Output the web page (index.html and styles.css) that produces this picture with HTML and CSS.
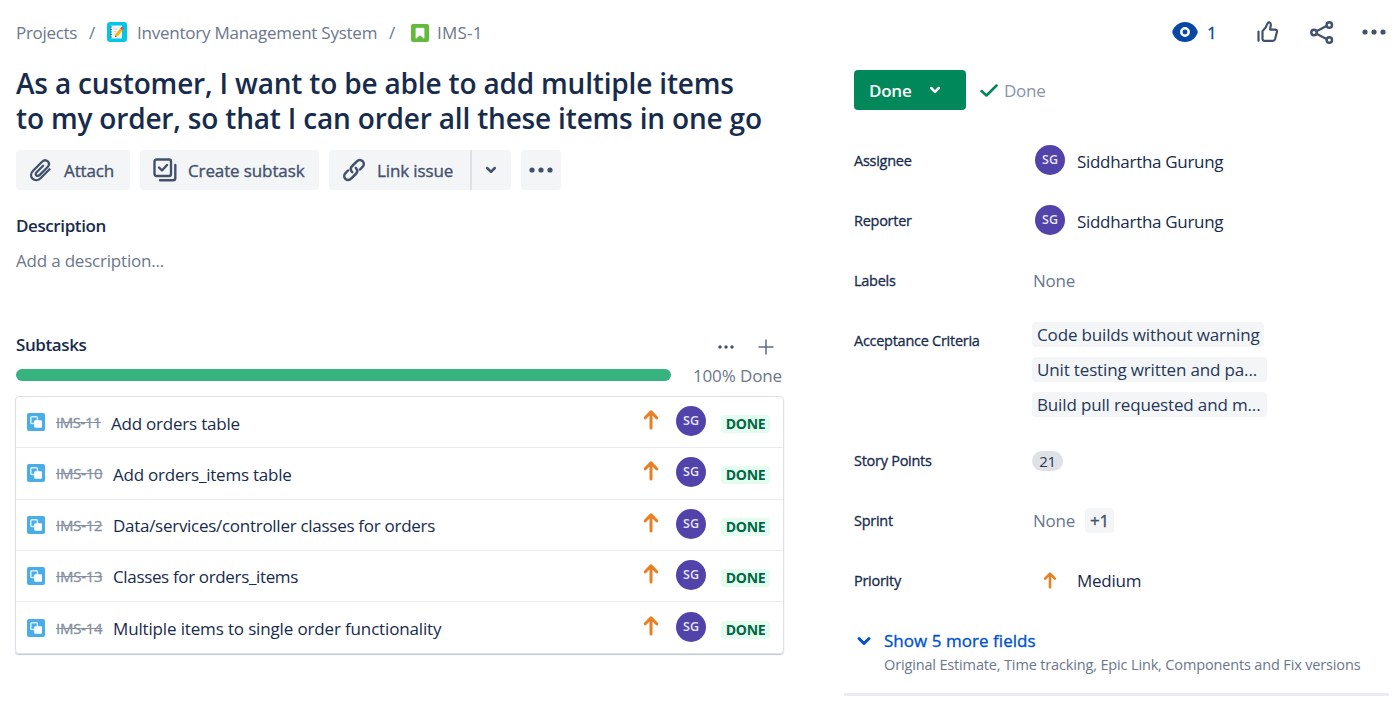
FILE: index.html
```
<!DOCTYPE html>
<html lang="en">
<head>
<meta charset="utf-8">
<title>IMS-1</title>
<link rel="stylesheet" href="styles.css">
</head>
<body>
<svg class="defs" width="0" height="0" aria-hidden="true">
  <symbol id="subtask" viewBox="0 0 18 18"><rect width="18" height="18" rx="2" fill="#4BADE8"/><rect x="3.8" y="3.8" width="6.6" height="6.6" rx="1" fill="none" stroke="#d5ecfa" stroke-width="1.5"/><rect x="7.2" y="7.2" width="7.8" height="7.6" rx="1.2" fill="#fff"/></symbol>
  <symbol id="arrow" viewBox="0 0 16 20"><path d="M8 18V2M2.300 7.800L8 1.900l5.700 5.900" fill="none" stroke="#E97F23" stroke-width="3" stroke-linecap="round" stroke-linejoin="round"/></symbol>
  <symbol id="chevron" viewBox="0 0 12 8"><path d="M2.200 2l3.800 3.800L9.800 2" fill="none" stroke="currentColor" stroke-width="2.500" stroke-linecap="round" stroke-linejoin="round"/></symbol>
  <symbol id="dots" viewBox="0 0 24 6"><circle cx="3" cy="3" r="2.6"/><circle cx="12" cy="3" r="2.6"/><circle cx="21" cy="3" r="2.6"/></symbol>
</svg>
<div class="page">
  <main class="main">
    <nav class="crumbs">
      <span class="c-projects">Projects</span><span class="slash">/</span>
      <svg class="project-icon" viewBox="0 0 20 20"><rect width="20" height="20" rx="3" fill="#00C7E5"/><rect x="4" y="3.500" width="11" height="13" fill="#f3f3f5"/><path d="M3 5h2M3 7.500h2M3 10h2M3 12.500h2M3 15h2" stroke="#596273" stroke-width="1"/><path d="M6.500 7h4M6.500 9.500h3M6.500 12h2" stroke="#c9ccd2" stroke-width=".8"/><path d="M8 15l1-3.500 4.500-5.300 2.300 1.800-4.500 5.500z" fill="#FFB300"/><path d="M13.200 6.500l1.500-1.800 2 1.600-1.400 1.900z" fill="#EC4055"/><path d="M8 15l.5-1.800 1.300 1z" fill="#424242"/></svg>
      <span class="c-name">Inventory Management System</span><span class="slash slash2">/</span>
      <svg class="story-icon" viewBox="0 0 18 18"><rect width="18" height="18" rx="2" fill="#63BA3C"/><path d="M5 4.300h8v10L9 10.800 5 14.300z" fill="#fff" stroke="#fff" stroke-width=".8" stroke-linejoin="round"/></svg>
      <span class="c-key">IMS-1</span>
    </nav>
    <h1 class="title">As a customer, I want to be able to add multiple items<br>to my order, so that I can order all these items in one go</h1>
    <div class="actions">
      <button class="btn attach"><svg width="24" height="26" viewBox="0 0 24 26"><path d="M21.500 12.300l-8.700 8.700c-2.500 2.500-6 2.800-8.200.7-2.200-2.200-1.900-5.600.5-8l8.700-8.700c1.900-1.900 4.400-2.100 6-.6 1.600 1.600 1.400 4-.4 5.800l-7.900 7.900c-1 1-2.400 1.100-3.200.3-.9-.9-.7-2.200.3-3.200l6.500-6.500" fill="none" stroke="#42526E" stroke-width="2.300" stroke-linecap="round"/></svg><span>Attach</span></button>
      <button class="btn create"><svg width="24" height="24" viewBox="0 0 24 24"><rect x="1.500" y="1.500" width="16.500" height="16.500" rx="2" fill="none" stroke="#42526E" stroke-width="2.400"/><path d="M6 9.500l3 3 5-5.500M7 22.300h13q2.300 0 2.300-2.300V7" fill="none" stroke="#42526E" stroke-width="2.400" stroke-linecap="round" stroke-linejoin="round"/></svg><span>Create subtask</span></button>
      <div class="split"><button class="btn link"><svg width="24" height="24" viewBox="0 0 24 24"><path d="M10.200 14.200c-1.900-2-1.700-4.500 0-6.200l4.700-4.700c1.700-1.700 4.100-1.700 5.700-.1s1.600 4-.1 5.700L18 11.500M13.800 9.800c1.900 2 1.700 4.500 0 6.200l-4.700 4.700c-1.700 1.700-4.100 1.700-5.700.1s-1.600-4 .1-5.700L6 12.500" fill="none" stroke="#42526E" stroke-width="2.500" stroke-linecap="round"/></svg><span>Link issue</span></button><button class="btn caret"><svg width="12" height="8"><use href="#chevron"/></svg></button></div>
      <button class="btn more"><svg width="24" height="6" fill="#42526E"><use href="#dots"/></svg></button>
    </div>
    <h2 class="label description">Description</h2>
    <p class="placeholder">Add a description...</p>
    <div class="subhead"><h2 class="label">Subtasks</h2>
      <svg class="dots-small" width="16" height="4" viewBox="0 0 24 6" fill="#42526E"><use href="#dots"/></svg>
      <svg class="plus" width="16" height="16" viewBox="0 0 16 16"><path d="M8 .5v15M.5 8h15" stroke="#5d6b84" stroke-width="1.500"/></svg>
    </div>
    <div class="progress"><div class="bar"></div><span>100% Done</span></div>
    <ul class="list">
      <li><svg class="type"><use href="#subtask"/></svg><span class="key k11">IMS-11</span><span class="name">Add orders table</span><svg class="prio"><use href="#arrow"/></svg><span class="avatar">SG</span><span class="badge">DONE</span></li>
      <li><svg class="type"><use href="#subtask"/></svg><span class="key">IMS-10</span><span class="name">Add orders_items table</span><svg class="prio"><use href="#arrow"/></svg><span class="avatar">SG</span><span class="badge">DONE</span></li>
      <li><svg class="type"><use href="#subtask"/></svg><span class="key">IMS-12</span><span class="name mid">Data/services/controller classes for orders</span><svg class="prio"><use href="#arrow"/></svg><span class="avatar">SG</span><span class="badge">DONE</span></li>
      <li><svg class="type"><use href="#subtask"/></svg><span class="key">IMS-13</span><span class="name tight">Classes for orders_items</span><svg class="prio"><use href="#arrow"/></svg><span class="avatar">SG</span><span class="badge">DONE</span></li>
      <li><svg class="type"><use href="#subtask"/></svg><span class="key">IMS-14</span><span class="name loose">Multiple items to single order functionality</span><svg class="prio"><use href="#arrow"/></svg><span class="avatar">SG</span><span class="badge">DONE</span></li>
    </ul>
  </main>
  <aside class="side">
    <div class="tools">
      <svg width="26" height="20" viewBox="0 0 26 20"><path d="M13 0C6.500 0 2.200 4.500.5 8.800q-.5 1.200 0 2.400C2.200 15.500 6.500 20 13 20s10.800-4.500 12.500-8.800q.5-1.200 0-2.400C23.800 4.500 19.500 0 13 0z" fill="#0747A6"/><circle cx="13" cy="10" r="3.700" fill="#0747A6" stroke="#fff" stroke-width="2.500"/></svg>
      <span class="watch">1</span>
      <svg class="thumb" width="22" height="22" viewBox="0 0 22 22" fill="none" stroke="#42526E" stroke-width="2.200" stroke-linecap="round" stroke-linejoin="round"><path d="M1.500 10.500v9.200M5.500 10.200v7.600q0 2 2 2h8.300q1.800 0 2.300-1.700l1.800-7q.6-2.500-1.900-2.500h-4.900l.7-4.600q.2-2.200-1.500-2.700-1.400-.2-2 1.500C9.300 6.500 8.300 8 5.500 10.200z"/></svg>
      <svg class="share" width="24" height="23" viewBox="0 0 24 23" fill="none" stroke="#42526E" stroke-width="2.400"><path d="M6.500 10.200L16.500 5M6.500 12.800l10 5.200"/><circle cx="4" cy="11.500" r="2.700"/><circle cx="19.300" cy="4" r="2.700"/><circle cx="19.300" cy="19" r="2.700"/></svg>
      <svg class="tdots" width="24" height="6" fill="#42526E"><use href="#dots"/></svg>
    </div>
    <div class="status"><button class="done"><span>Done</span><svg width="12" height="8"><use href="#chevron"/></svg></button><svg class="check" width="18" height="13" viewBox="0 0 18 13"><path d="M1.500 7l5 4.500L16.500 1.500" fill="none" stroke="#00875A" stroke-width="2.500" stroke-linecap="round" stroke-linejoin="round"/></svg><span class="resolution">Done</span></div>
    <dl class="fields">
      <dt>Assignee</dt><dd class="person"><span class="avatar">SG</span><span class="pname">Siddhartha Gurung</span></dd>
      <dt>Reporter</dt><dd class="person"><span class="avatar">SG</span><span class="pname">Siddhartha Gurung</span></dd>
      <dt>Labels</dt><dd class="none"><span>None</span></dd>
      <dt class="ac">Acceptance Criteria</dt><dd class="criteria"><span class="tag g1">Code builds without warning</span><span class="tag g2">Unit testing written and pa...</span><span class="tag g3">Build pull requested and m...</span></dd>
      <dt>Story Points</dt><dd><span class="points">21</span></dd>
      <dt>Sprint</dt><dd class="none"><span>None</span><span class="plus-one">+1</span></dd>
      <dt>Priority</dt><dd class="medium"><svg class="prio"><use href="#arrow"/></svg><span>Medium</span></dd>
    </dl>
    <div class="morefields"><svg width="16" height="10" viewBox="0 0 16 10"><path d="M3 2.500l5 5 5-5" fill="none" stroke="#0052CC" stroke-width="3" stroke-linecap="round" stroke-linejoin="round"/></svg><div><div class="show">Show 5 more fields</div><div class="hint">Original Estimate, Time tracking, Epic Link, Components and Fix versions</div></div></div>
  </aside>
</div>
</body>
</html>
```
FILE: styles.css
```
* { box-sizing: border-box; margin: 0; padding: 0; }
body { width: 1395px; height: 702px; overflow: hidden; background: #fff; color: #172B4D; font: 400 17px/24px "Open Sans", "Noto Sans", sans-serif; letter-spacing: -.24px; }
.defs { display: block; }
svg { flex: none; }
span, h1, dt, p { white-space: nowrap; }
.page { display: grid; grid-template-columns: 768px 551px; column-gap: 60px; padding-left: 16px; }
.crumbs { display: flex; align-items: center; height: 64px; color: #6B778C; }
.crumbs span, .btn span, .done span, .resolution, .tools span, .fields .none > span:first-child, .medium span { padding-top: 2px; }
.c-projects { width: 61px; letter-spacing: -.3px; }
.slash { width: 30px; text-align: center; }
.project-icon { width: 20px; height: 20px; }
.c-name { width: 240px; margin-left: 10px; }
.story-icon { width: 18px; height: 18px; margin-left: 4px; margin-top: 2px; }
.c-key { margin-left: 8px; letter-spacing: .2px; }
.title { height: 86px; padding-top: 2px; font-size: 28px; font-weight: 600; line-height: 35px; letter-spacing: -.18px; }
.actions { display: flex; gap: 10px; }
button { border: 0; font: inherit; letter-spacing: inherit; color: inherit; }
.btn { display: flex; align-items: center; height: 40px; border-radius: 4px; background: #F4F5F7; color: #42526E; letter-spacing: -.12px; -webkit-text-stroke: .35px currentColor; }
.attach { width: 114px; padding-left: 12px; gap: 12px; }
.create { width: 179px; padding-left: 13px; gap: 11px; }
.split { display: flex; }
.link { width: 141px; padding-left: 13px; gap: 11px; border-radius: 4px 0 0 4px; }
.caret { width: 41px; padding-left: 13px; border-left: 2px solid #DFE1E6; border-radius: 0 4px 4px 0; }
.more { width: 40px; justify-content: center; }
.label { font-size: 17px; line-height: 24px; font-weight: 600; letter-spacing: -.4px; }
.description { margin-top: 24px; }
.placeholder { height: 82px; margin-top: 11px; letter-spacing: -.2px; color: #6B778C; }
.subhead { display: flex; align-items: center; height: 30px; }
.subhead .label { margin-top: -2px; }
.dots-small { margin-left: auto; margin-top: 2px; }
.plus { margin: 2px 10px 0 24px; }
.progress { display: flex; align-items: center; justify-content: space-between; height: 24px; margin-top: 2px; padding-right: 2px; color: #6B778C; letter-spacing: -.12px; }
.bar { width: 655px; height: 12px; border-radius: 6px; background: #36B37E; }
.progress span { padding-top: 1px; }
.list { list-style: none; width: 769px; margin: 9px 0 0 -1px; border: 1px solid #DFE1E6; border-radius: 4px; box-shadow: 0 1px 1px rgba(9,30,66,.25); }
.list li { display: flex; align-items: center; height: 51.25px; padding: 0 13px 0 11px; border-bottom: 1px solid #EBECF0; }
.list li:last-child { border: 0; }
.type { width: 18px; height: 18px; }
.key { width: 47px; margin-left: 11px; color: #8590a2; font-size: 15px; letter-spacing: -.25px; -webkit-text-stroke: .3px currentColor; text-decoration: line-through; }
.k11 { width: 45px; letter-spacing: -.45px; }
.name { margin: 3px 0 0 10px; letter-spacing: -.22px; }
.name.mid { letter-spacing: -.28px; }
.name.tight { letter-spacing: -.35px; }
.name.loose { letter-spacing: -.15px; }
.list .prio { margin: -4px 0 0 auto; }
.prio { width: 16px; height: 20px; }
.avatar { width: 30px; height: 30px; border-radius: 50%; background: #5243AA; color: #e6e3f5; font-size: 12.5px; font-weight: 600; line-height: 29px; text-align: center; letter-spacing: 0; }
.list .avatar { margin: -2px 15px 0 17px; }
.badge { width: 49px; height: 18px; margin-top: 4px; border-radius: 4px; background: #E3FCEF; color: #006644; font-size: 14px; font-weight: 700; line-height: 18px; text-align: center; letter-spacing: -.35px; }
.tools { display: flex; align-items: center; height: 64px; padding-left: 328px; }
.watch { width: 12px; margin-left: 9px; color: #0747A6; -webkit-text-stroke: .3px currentColor; }
.thumb { margin-left: 38px; }
.share { margin-left: 31px; }
.tdots { margin-left: 28px; }
.status { display: flex; align-items: center; height: 40px; margin: 6px 0 20px 10px; }
.done { display: flex; align-items: center; width: 112px; height: 40px; padding-left: 15px; gap: 18px; border-radius: 4px; background: #00875A; color: #fff; font-weight: 600; }
.check { margin-left: 14px; }
.resolution { margin-left: 6px; color: #8993A4; }
.fields { display: grid; grid-template-columns: 178px 1fr; grid-template-rows: 60px 60px 60px 120px 60px 60px 60px; align-items: center; margin-left: 10px; }
.fields dt { padding-top: 2px; font-size: 14.5px; letter-spacing: -.27px; -webkit-text-stroke: .3px currentColor; }
.fields .ac { align-self: start; padding-top: 19px; }
.fields dd { display: flex; align-items: center; }
.person .avatar { margin-left: 3px; }
.pname { margin: 3px 0 0 12px; letter-spacing: -.3px; }
.fields .none { gap: 10px; color: #6B778C; padding-left: 1px; }
.fields .criteria { flex-direction: column; align-items: flex-start; align-self: start; gap: 10px; padding-top: 12px; }
.tag { height: 25px; padding-left: 5px; border-radius: 4px; background: #F4F5F7; color: #253858; line-height: 26px; letter-spacing: -.15px; }
.g1 { width: 232px; }
.g2, .g3 { width: 235px; }
.points { width: 31px; height: 20px; border-radius: 10px; background: #DFE1E6; color: #253858; font-size: 15px; line-height: 20px; text-align: center; margin-top: 2px; }
.plus-one { width: 29px; height: 25px; line-height: 26px; border-radius: 4px; background: #F4F5F7; color: #42526E; -webkit-text-stroke: .35px currentColor; text-align: center; }
.medium .prio { width: 14px; height: 17px; margin: 0 20px 0 11px; }
.morefields { display: flex; gap: 12px; height: 86px; padding: 19px 0 0 12px; border-bottom: 3px solid #EBECF0; width: 545px; }
.morefields > svg { margin-top: 7px; }
.show { color: #0052CC; letter-spacing: .04px; -webkit-text-stroke: .35px currentColor; }
.hint { color: #6B778C; font-size: 14.5px; letter-spacing: -.15px; white-space: nowrap; }
```
